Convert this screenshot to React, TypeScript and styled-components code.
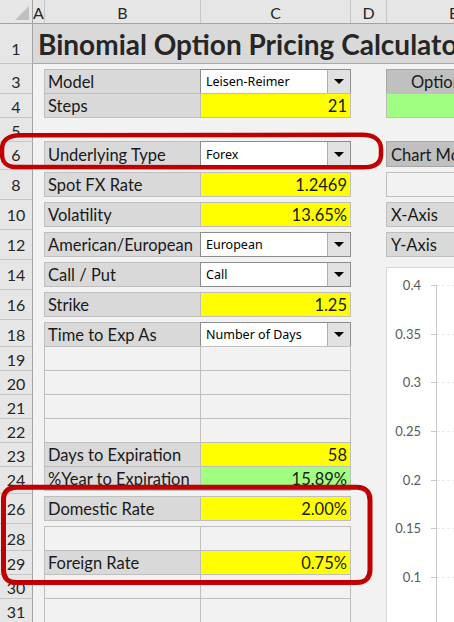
import React from "react";
import styled, { createGlobalStyle, css } from "styled-components";

const FONT = `Lato, "Liberation Sans", sans-serif`;

const ROW_HEIGHTS = [
  40, 6, 24, 24, 24, 25, 6, 24, 6, 24, 6, 24, 6, 24, 6, 24, 6, 24, 24, 24, 24,
  24, 24, 24, 6, 24, 6, 24, 24, 24, 24,
];
const isSmall = (r: number) => ROW_HEIGHTS[r - 1] === 6;

const GlobalStyle = createGlobalStyle`
  html, body { margin: 0; padding: 0; }
  body {
    width: 454px;
    height: 622px;
    overflow: hidden;
    background: #f2f2f2;
    font-family: ${FONT};
  }
  #root { width: 454px; height: 622px; overflow: hidden; }
`;

const Sheet = styled.div`
  position: relative;
  display: grid;
  grid-template-columns: 33px 11px 156px 150px 36px 134px;
  grid-template-rows: 23px ${ROW_HEIGHTS.map((h) => `${h}px`).join(" ")};
  width: 520px;
  background: #f2f2f2;
  font-family: ${FONT};
`;

const Corner = styled.div`
  grid-row: 1;
  grid-column: 1;
  box-sizing: border-box;
  background: #e6e6e6;
  border-right: 1px solid #a3a3a3;
  box-shadow: 0 1px 0 #a3a3a3;
  display: flex;
  align-items: flex-end;
  justify-content: flex-end;
  padding: 0 3px 3px 0;
`;

const CornerTriangle = styled.span`
  width: 0;
  height: 0;
  border-left: 14px solid transparent;
  border-bottom: 14px solid #c0c0c0;
`;

const ColHeader = styled.div<{ $col: number; $divider?: boolean }>`
  grid-row: 1;
  grid-column: ${(p) => p.$col};
  box-sizing: border-box;
  background: #e6e6e6;
  border-left: ${(p) => (p.$divider ? "1px solid #c6c6c6" : "none")};
  box-shadow: 0 1px 0 #a3a3a3;
  display: flex;
  align-items: center;
  justify-content: center;
  padding-top: 2px;
  font-size: 16px;
  color: #262626;
  overflow: hidden;
`;

type Line = "top" | "middle" | "none";

const RowHeader = styled.div<{ $row: number; $line: Line; $tall?: boolean }>`
  grid-row: ${(p) => p.$row + 1};
  grid-column: 1;
  box-sizing: border-box;
  background-color: #e6e6e6;
  border-right: 1px solid #a3a3a3;
  border-top: ${(p) => (p.$line === "top" ? "1px solid #c6c6c6" : "none")};
  ${(p) =>
    p.$line === "middle" &&
    css`
      background-image: linear-gradient(#c6c6c6, #c6c6c6);
      background-size: 100% 1px;
      background-position: 0 3px;
      background-repeat: no-repeat;
    `}
  display: flex;
  align-items: center;
  justify-content: center;
  padding-top: ${(p) => (p.$tall ? 10 : 1)}px;
  font-size: 16px;
  color: #262626;
  overflow: hidden;
`;

const TitleBand = styled.div`
  grid-row: 2;
  grid-column: 2 / -1;
  background: #d9d9d9;
  box-shadow: 0 1px 0 #a8a8a8;
  display: flex;
  align-items: center;
  padding: 1px 0 0 5px;
  font-size: 28px;
  font-weight: 700;
  color: #262626;
  white-space: nowrap;
  overflow: hidden;
`;

const CellBase = styled.div<{ $row: number; $col: number }>`
  grid-row: ${(p) => p.$row + 1};
  grid-column: ${(p) => p.$col};
  margin: 0 -1px -1px 0;
  box-sizing: border-box;
  border: 1px solid #bfbfbf;
  display: flex;
  align-items: center;
  min-width: 0;
  overflow: hidden;
  white-space: nowrap;
  font-size: 16.5px;
  color: #1a1a1a;
`;

const LabelCell = styled(CellBase)`
  background: #d9d9d9;
  padding: 1px 0 0 3px;
`;

type Fill = "yellow" | "green" | "none";
const FILLS: Record<Fill, string> = {
  yellow: "#ffff00",
  green: "#a0ff80",
  none: "#f2f2f2",
};

const ValueCell = styled(CellBase)<{ $fill: Fill }>`
  background: ${(p) => FILLS[p.$fill]};
  justify-content: flex-end;
  padding: 1px 3px 0 0;
`;

const BlankCell = styled(CellBase)`
  background: #f2f2f2;
`;

const SideHeader = styled(CellBase)<{ $tone: "dark" | "light"; $indent: number }>`
  background: ${(p) => (p.$tone === "dark" ? "#c0c0c0" : "#d9d9d9")};
  border-color: ${(p) => (p.$tone === "dark" ? "#a6a6a6" : "#bfbfbf")};
  padding: 1px 0 0 ${(p) => p.$indent}px;
`;

const DropdownCell = styled(CellBase)`
  background: #ffffff;
  border-color: #8c8c8c;
  padding-left: 5px;
  font-family: "Noto Sans", sans-serif;
  font-size: 12.5px;
  color: #000;
`;

const DropText = styled.span`
  flex: 1;
  overflow: hidden;
`;

const DropButton = styled.span`
  align-self: stretch;
  flex: none;
  width: 23px;
  box-sizing: border-box;
  background: #e1e1e1;
  border-left: 1px solid #adadad;
  display: flex;
  align-items: center;
  justify-content: center;
`;

const Caret = styled.span`
  width: 0;
  height: 0;
  border-left: 5px solid transparent;
  border-right: 5px solid transparent;
  border-top: 5px solid #000;
`;

const ChartPanel = styled.div`
  grid-row: 15 / span 18;
  grid-column: 6;
  align-self: start;
  justify-self: start;
  margin-top: 5px;
  width: 300px;
  height: 420px;
  box-sizing: border-box;
  background: #ffffff;
  border: 1px solid #d9d9d9;
`;

const Annotations = styled.svg`
  position: absolute;
  left: 0;
  top: 0;
  width: 454px;
  height: 622px;
  pointer-events: none;
`;

type RowSpec =
  | { row: number; kind: "dropdown"; label: string; value: string }
  | { row: number; kind: "value"; label: string; value: string; fill: Fill }
  | { row: number; kind: "blank" };

const ROWS: RowSpec[] = [
  { row: 3, kind: "dropdown", label: "Model", value: "Leisen-Reimer" },
  { row: 4, kind: "value", label: "Steps", value: "21", fill: "yellow" },
  { row: 6, kind: "dropdown", label: "Underlying Type", value: "Forex" },
  { row: 8, kind: "value", label: "Spot FX Rate", value: "1.2469", fill: "yellow" },
  { row: 10, kind: "value", label: "Volatility", value: "13.65%", fill: "yellow" },
  { row: 12, kind: "dropdown", label: "American/European", value: "European" },
  { row: 14, kind: "dropdown", label: "Call / Put", value: "Call" },
  { row: 16, kind: "value", label: "Strike", value: "1.25", fill: "yellow" },
  { row: 18, kind: "dropdown", label: "Time to Exp As", value: "Number of Days" },
  { row: 19, kind: "blank" },
  { row: 20, kind: "blank" },
  { row: 21, kind: "blank" },
  { row: 22, kind: "blank" },
  { row: 23, kind: "value", label: "Days to Expiration", value: "58", fill: "yellow" },
  { row: 24, kind: "value", label: "%Year to Expiration", value: "15.89%", fill: "green" },
  { row: 26, kind: "value", label: "Domestic Rate", value: "2.00%", fill: "yellow" },
  { row: 28, kind: "blank" },
  { row: 29, kind: "value", label: "Foreign Rate", value: "0.75%", fill: "yellow" },
  { row: 30, kind: "blank" },
  { row: 31, kind: "blank" },
];

const COLUMNS = [
  { col: 2, name: "A", divider: false },
  { col: 3, name: "B", divider: true },
  { col: 4, name: "C", divider: true },
  { col: 5, name: "D", divider: true },
  { col: 6, name: "E", divider: true },
];

const TICKS = ["0.4", "0.35", "0.3", "0.25", "0.2", "0.15", "0.1"];

function rowLine(r: number): Line {
  if (r === 2) return "top";
  if (isSmall(r)) return "middle";
  if (r === 1 || isSmall(r - 1)) return "none";
  return "top";
}

function TableRow({ spec }: { spec: RowSpec }) {
  if (spec.kind === "blank") {
    return (
      <>
        <BlankCell $row={spec.row} $col={3} />
        <BlankCell $row={spec.row} $col={4} />
      </>
    );
  }
  return (
    <>
      <LabelCell $row={spec.row} $col={3}>
        {spec.label}
      </LabelCell>
      {spec.kind === "dropdown" ? (
        <DropdownCell $row={spec.row} $col={4}>
          <DropText>{spec.value}</DropText>
          <DropButton>
            <Caret />
          </DropButton>
        </DropdownCell>
      ) : (
        <ValueCell $row={spec.row} $col={4} $fill={spec.fill}>
          {spec.value}
        </ValueCell>
      )}
    </>
  );
}

function Chart() {
  return (
    <ChartPanel>
      <svg width="298" height="418" style={{ display: "block" }}>
        <line x1={49.5} y1={17} x2={49.5} y2={418} stroke="#c8c8c8" />
        {[...TICKS, "", ""].map((t, i) => {
          const y = Math.round(17 + i * 48.67) + 0.5;
          return (
            <g key={i}>
              <line x1={50} x2={298} y1={y} y2={y} stroke="#ececec" strokeDasharray="3 2" />
              <line x1={44} x2={50} y1={y} y2={y} stroke="#c8c8c8" />
              {t && (
                <text
                  x={34}
                  y={y + 4.5}
                  textAnchor="end"
                  fontSize={13}
                  fill="#595959"
                  fontFamily="Lato, sans-serif"
                >
                  {t}
                </text>
              )}
            </g>
          );
        })}
      </svg>
    </ChartPanel>
  );
}

export default function App() {
  return (
    <>
      <GlobalStyle />
      <Sheet>
        {ROW_HEIGHTS.map((_, i) => {
          const r = i + 1;
          return (
            <RowHeader key={r} $row={r} $line={rowLine(r)} $tall={r === 1}>
              {isSmall(r) ? null : r}
            </RowHeader>
          );
        })}

        <TitleBand>Binomial Option Pricing Calculator</TitleBand>

        {ROWS.map((spec) => (
          <TableRow key={spec.row} spec={spec} />
        ))}

        <SideHeader $row={3} $col={6} $tone="dark" $indent={24}>
          Option Price
        </SideHeader>
        <ValueCell $row={4} $col={6} $fill="green" />
        <SideHeader $row={6} $col={6} $tone="dark" $indent={4}>
          Chart Model
        </SideHeader>
        <BlankCell $row={8} $col={6} />
        <SideHeader $row={10} $col={6} $tone="light" $indent={4}>
          X-Axis
        </SideHeader>
        <SideHeader $row={12} $col={6} $tone="light" $indent={4}>
          Y-Axis
        </SideHeader>

        <Chart />

        <Corner>
          <CornerTriangle />
        </Corner>
        {COLUMNS.map((c) => (
          <ColHeader key={c.name} $col={c.col} $divider={c.divider}>
            {c.name}
          </ColHeader>
        ))}

        <Annotations viewBox="0 0 454 622">
          <path
            d="M 20 135.3 L 362 134.8 C 374 134.8 381 140 381 149 L 381 155 C 381 163 375 167.3 363 167.3 L 15 167 C 7 167 2 162 2 154 L 2 149 C 2 140 9 135.5 20 135.3 Z"
            fill="none"
            stroke="#c00000"
            strokeWidth={4.5}
          />
          <path
            d="M 17 487.3 L 357 487.3 C 365 487.3 370 492 370 500 L 370 570 C 370 578 365 582.5 357 582.5 L 16 582.5 C 8 582.5 3.5 578 3.5 570 L 3.5 500 C 3.5 492 8 487.3 17 487.3 Z"
            fill="none"
            stroke="#c00000"
            strokeWidth={5}
          />
        </Annotations>
      </Sheet>
    </>
  );
}
